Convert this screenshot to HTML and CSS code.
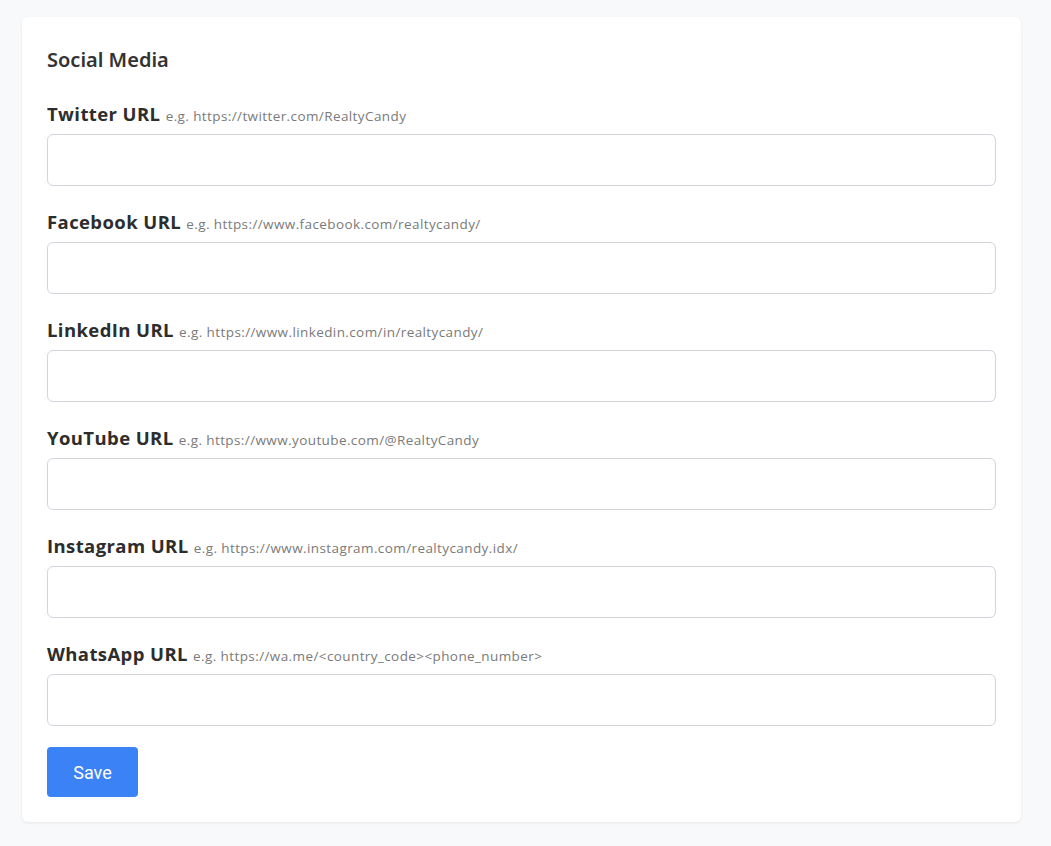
FILE: index.html
```html
<!DOCTYPE html>
<html lang="en">
<head>
    <meta charset="UTF-8">
    <meta name="viewport" content="width=device-width, initial-scale=1.0">
    <title>Social Media</title>
    <link rel="stylesheet" href="styles.css">
</head>
<body>
    <div class="page">
        <form class="card">
            <h2 class="card-title">Social Media</h2>

            <div class="field">
                <label class="field-label">Twitter URL <span class="hint">e.g. https://twitter.com/RealtyCandy</span></label>
                <input type="text" class="field-input">
            </div>

            <div class="field">
                <label class="field-label">Facebook URL <span class="hint">e.g. https://www.facebook.com/realtycandy/</span></label>
                <input type="text" class="field-input">
            </div>

            <div class="field">
                <label class="field-label">LinkedIn URL <span class="hint">e.g. https://www.linkedin.com/in/realtycandy/</span></label>
                <input type="text" class="field-input">
            </div>

            <div class="field">
                <label class="field-label">YouTube URL <span class="hint">e.g. https://www.youtube.com/@RealtyCandy</span></label>
                <input type="text" class="field-input">
            </div>

            <div class="field">
                <label class="field-label">Instagram URL <span class="hint">e.g. https://www.instagram.com/realtycandy.idx/</span></label>
                <input type="text" class="field-input">
            </div>

            <div class="field">
                <label class="field-label">WhatsApp URL <span class="hint">e.g. https://wa.me/&lt;country_code&gt;&lt;phone_number&gt;</span></label>
                <input type="text" class="field-input">
            </div>

            <button type="button" class="save-btn">Save</button>
        </form>
    </div>
</body>
</html>
```

FILE: styles.css
```css
* {
    margin: 0;
    padding: 0;
    box-sizing: border-box;
}

body {
    background: #f8f9fb;
    font-family: 'Open Sans', 'Lato', sans-serif;
    color: #2b2b2b;
}

.page {
    padding: 17px 30px 24px 22px;
}

.card {
    background: #fff;
    border-radius: 6px;
    box-shadow: 0 1px 3px rgba(0, 0, 0, 0.08);
    padding: 25px;
    display: flex;
    flex-direction: column;
}

.card-title {
    font-family: 'Noto Sans', 'Open Sans', sans-serif;
    font-size: 20px;
    font-weight: 600;
    line-height: 36px;
    color: #333;
    margin-bottom: 24px;
}

.field {
    display: flex;
    flex-direction: column;
    gap: 8px;
    margin-bottom: 24px;
}

.field:last-of-type {
    margin-bottom: 21px;
}

.field-label {
    display: block;
    height: 24px;
    font-size: 18.5px;
    font-weight: 700;
    letter-spacing: 0.4px;
    line-height: 24px;
    color: #2d2d2d;
}

.hint {
    font-size: 13.5px;
    font-weight: 400;
    letter-spacing: 0.4px;
    line-height: 1;
    color: #7a7a7a;
}

.field-input {
    height: 52px;
    width: 100%;
    border: 1px solid #d4d4dc;
    border-radius: 6px;
    padding: 0 14px;
    font-size: 15px;
    outline: none;
}

.save-btn {
    align-self: flex-start;
    width: 91px;
    height: 50px;
    background: #3b82f6;
    color: #fff;
    border: none;
    border-radius: 4px;
    font-family: 'Roboto', 'Liberation Sans', sans-serif;
    font-size: 18px;
    cursor: pointer;
}
```
